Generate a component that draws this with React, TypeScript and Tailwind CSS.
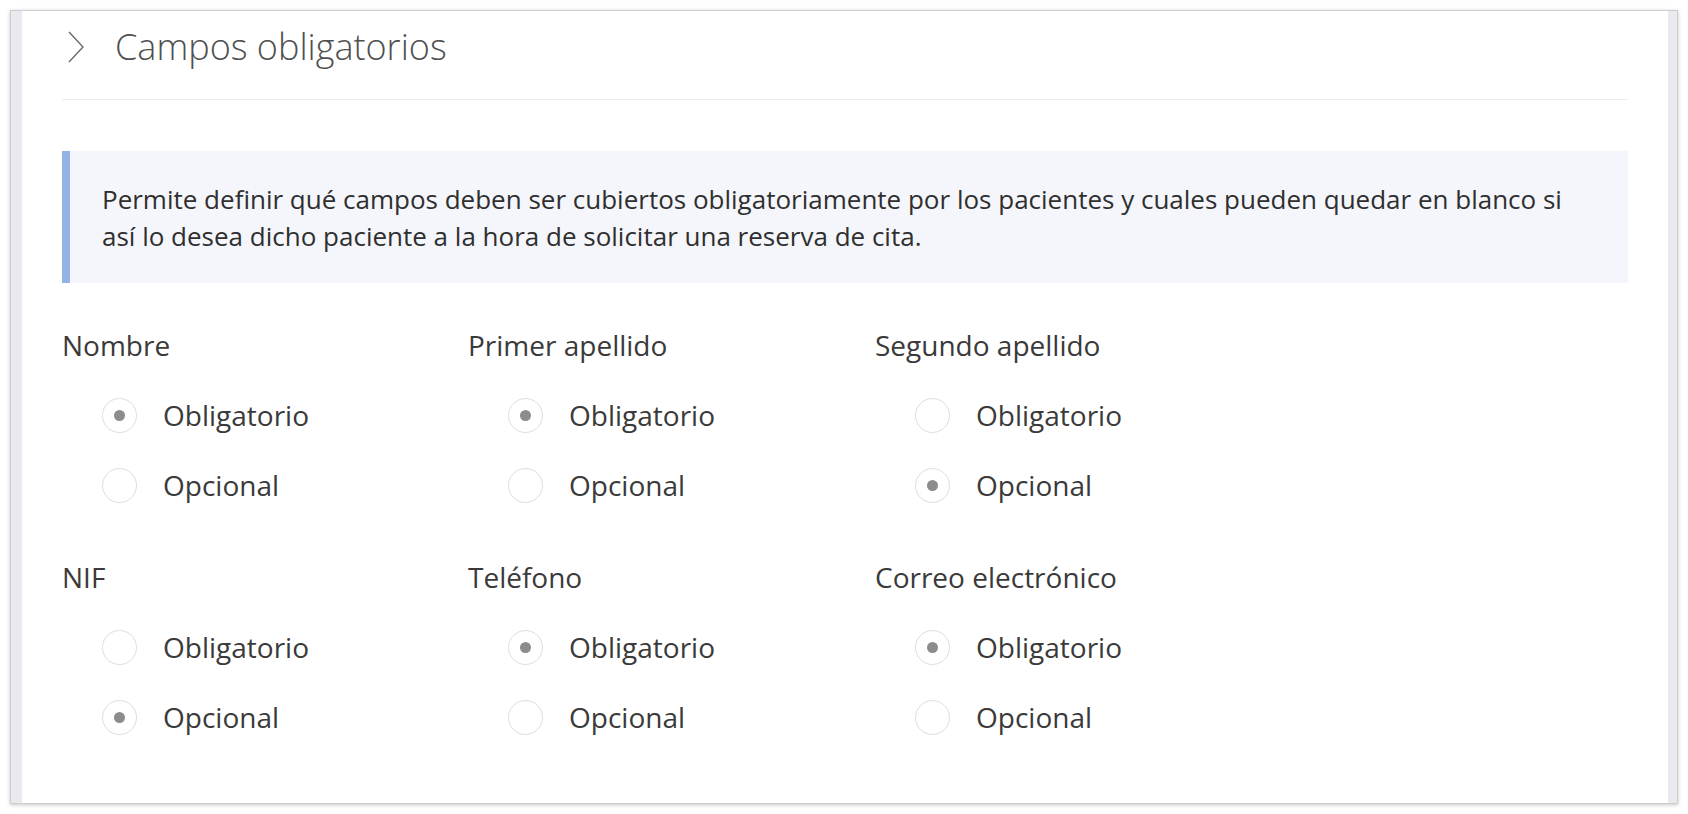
import React from "react"

type Choice = "obligatorio" | "opcional"

type Field = {
  label: string
  value: Choice
}

const fields: Field[] = [
  { label: "Nombre", value: "obligatorio" },
  { label: "Primer apellido", value: "obligatorio" },
  { label: "Segundo apellido", value: "opcional" },
  { label: "NIF", value: "opcional" },
  { label: "Teléfono", value: "obligatorio" },
  { label: "Correo electrónico", value: "obligatorio" },
]

function Radio({ checked, text }: { checked: boolean; text: string }) {
  return (
    <label className="flex h-[70px] items-center pl-[40px]">
      <span className="flex h-[35px] w-[35px] shrink-0 items-center justify-center rounded-full border border-[#dedede] bg-white">
        {checked && <span className="h-[11px] w-[11px] rounded-full bg-[#8c8c8c]" />}
      </span>
      <span className="ml-[26px] text-[28px] text-[#3a3a3a]">{text}</span>
    </label>
  )
}

function FieldBlock({ field }: { field: Field }) {
  return (
    <div className="flex flex-col">
      <div className="h-[38px] text-[28px] leading-[38px] text-[#3a3a3a]">{field.label}</div>
      <div className="mt-[16px] flex flex-col">
        <Radio checked={field.value === "obligatorio"} text="Obligatorio" />
        <Radio checked={field.value === "opcional"} text="Opcional" />
      </div>
    </div>
  )
}

export default function App() {
  return (
    <div
      className="h-[814px] w-[1688px] bg-white p-[10px]"
      style={{ fontFamily: '"Open Sans", "Noto Sans", sans-serif' }}
    >
      <div className="flex h-[794px] border border-[#cdcdcd] bg-white shadow-[0_1px_4px_rgba(0,0,0,0.22)]">
        <div className="w-[11px] bg-[#e9eaef]" />
        <div className="flex-1 px-[40px]">
          {/* Header */}
          <div className="flex h-[89px] items-center border-b border-[#ececec] pb-[16px]">
            <svg width="16" height="32" viewBox="0 0 16 32" className="ml-[6px]">
              <polyline points="1,1 15,16 1,31" fill="none" stroke="#6b6b6b" strokeWidth="1.4" />
            </svg>
            <h2 className="ml-[31px] text-[36px] font-light text-[#4f4f4f]">Campos obligatorios</h2>
          </div>

          {/* Info */}
          <div className="mt-[51px] border-l-[8px] border-[#94b3e5] bg-[#f5f6fb] pb-[28px] pl-[32px] pr-[30px] pt-[30px] text-[26px] leading-[37px] text-[#2f2f2f]">
            Permite definir qué campos deben ser cubiertos obligatoriamente por los pacientes y cuales
            pueden quedar en blanco si así lo desea dicho paciente a la hora de solicitar una reserva
            de cita.
          </div>

          {/* Campos */}
          <div className="mt-[43px] grid grid-cols-[406px_407px_406px] gap-y-[38px]">
            {fields.map((f) => (
              <FieldBlock key={f.label} field={f} />
            ))}
          </div>
        </div>
        <div className="w-[9px] bg-[#e9eaef]" />
      </div>
    </div>
  )
}
